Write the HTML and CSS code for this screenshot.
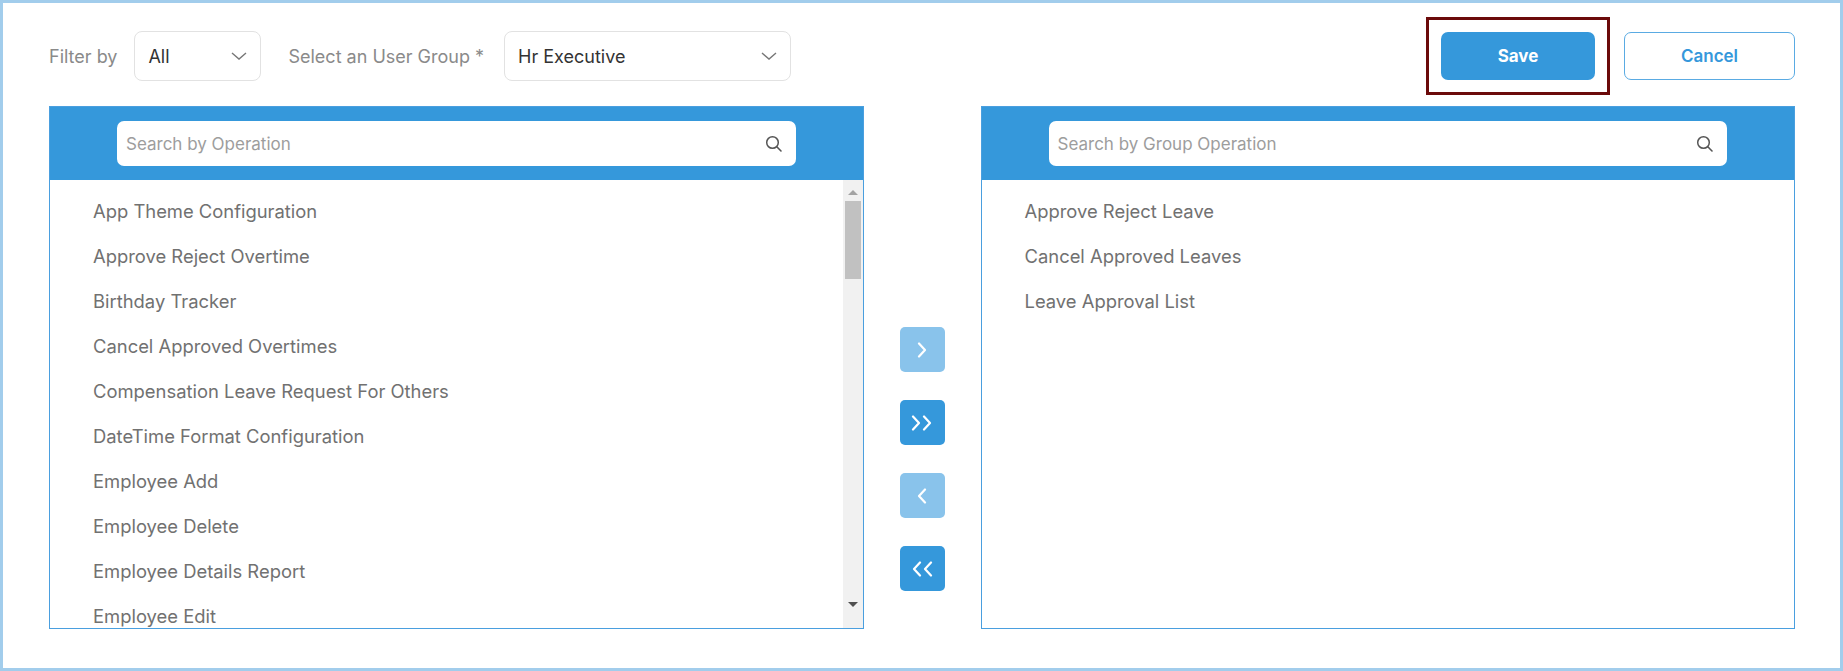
FILE: index.html
```
<!DOCTYPE html>
<html lang="en">
<head>
  <meta charset="UTF-8">
  <meta name="viewport" content="width=device-width, initial-scale=1.0">
  <title>User Group Operations</title>
  <link rel="stylesheet" href="styles.css">
</head>
<body>

  <div class="page">
    <!-- toolbar -->
    <div class="toolbar">
      <span class="label">Filter by</span>
      <div class="select select-filter">
        <span>All</span>
        <svg class="chevron" width="16" height="8" viewBox="0 0 16 8"><path d="M1 1 L8 7 L15 1" fill="none" stroke="#777" stroke-width="1.4"/></svg>
      </div>
      <span class="label label-group">Select an User Group *</span>
      <div class="select select-group">
        <span>Hr Executive</span>
        <svg class="chevron" width="16" height="8" viewBox="0 0 16 8"><path d="M1 1 L8 7 L15 1" fill="none" stroke="#777" stroke-width="1.4"/></svg>
      </div>

      <div class="actions">
        <div class="highlight">
          <button class="btn btn-save">Save</button>
        </div>
        <button class="btn btn-cancel">Cancel</button>
      </div>
    </div>

    <!-- lists -->
    <div class="transfer">
      <div class="panel">
        <div class="panel-head">
          <div class="search">
            <span class="placeholder">Search by Operation</span>
            <svg width="18" height="18" viewBox="0 0 18 18"><circle cx="7.5" cy="7.5" r="5.8" fill="none" stroke="#555" stroke-width="1.5"/><path d="M11.8 11.8 L16 16" stroke="#555" stroke-width="1.6" stroke-linecap="round"/></svg>
          </div>
        </div>
        <div class="panel-body">
          <ul class="list">
            <li>App Theme Configuration</li>
            <li>Approve Reject Overtime</li>
            <li>Birthday Tracker</li>
            <li>Cancel Approved Overtimes</li>
            <li>Compensation Leave Request For Others</li>
            <li>DateTime Format Configuration</li>
            <li>Employee Add</li>
            <li>Employee Delete</li>
            <li>Employee Details Report</li>
            <li>Employee Edit</li>
          </ul>
          <div class="scrollbar">
            <div class="sb-arrow"><span class="tri-up"></span></div>
            <div class="sb-thumb"></div>
            <div class="sb-space"></div>
            <div class="sb-arrow sb-bottom"><span class="tri-down"></span></div>
          </div>
        </div>
      </div>

      <div class="moves">
        <button class="move light">
          <svg width="10" height="16" viewBox="0 0 10 16"><path d="M2 1.5 L8 8 L2 14.5" fill="none" stroke="#fff" stroke-width="2.2" stroke-linecap="round" stroke-linejoin="round"/></svg>
        </button>
        <button class="move">
          <svg width="22" height="16" viewBox="0 0 22 16"><path d="M2 1.5 L8 8 L2 14.5 M13 1.5 L19 8 L13 14.5" fill="none" stroke="#fff" stroke-width="2.2" stroke-linecap="round" stroke-linejoin="round"/></svg>
        </button>
        <button class="move light">
          <svg width="10" height="16" viewBox="0 0 10 16"><path d="M8 1.5 L2 8 L8 14.5" fill="none" stroke="#fff" stroke-width="2.2" stroke-linecap="round" stroke-linejoin="round"/></svg>
        </button>
        <button class="move">
          <svg width="22" height="16" viewBox="0 0 22 16"><path d="M9 1.5 L3 8 L9 14.5 M20 1.5 L14 8 L20 14.5" fill="none" stroke="#fff" stroke-width="2.2" stroke-linecap="round" stroke-linejoin="round"/></svg>
        </button>
      </div>

      <div class="panel">
        <div class="panel-head">
          <div class="search">
            <span class="placeholder">Search by Group Operation</span>
            <svg width="18" height="18" viewBox="0 0 18 18"><circle cx="7.5" cy="7.5" r="5.8" fill="none" stroke="#555" stroke-width="1.5"/><path d="M11.8 11.8 L16 16" stroke="#555" stroke-width="1.6" stroke-linecap="round"/></svg>
          </div>
        </div>
        <div class="panel-body">
          <ul class="list">
            <li>Approve Reject Leave</li>
            <li>Cancel Approved Leaves</li>
            <li>Leave Approval List</li>
          </ul>
        </div>
      </div>
    </div>
  </div>

</body>
</html>
```

FILE: styles.css
```
/* base */
* {
  box-sizing: border-box;
}

body {
  margin: 0;
  font-family: Inter, 'Noto Sans', sans-serif;
  background: #fff;
  color: #333;
}

.page {
  height: 100vh;
  border: 3px solid #a2cdec;
  padding: 14px 45px 39px 46px;
  display: flex;
  flex-direction: column;
}

/* toolbar */
.toolbar {
  display: flex;
  align-items: center;
}

.label {
  font-size: 18px;
  color: #8a8a8a;
  margin-right: 17px;
}

.label-group {
  margin-left: 27px;
  margin-right: 20px;
}

.select {
  height: 50px;
  border: 1px solid #e2e2e2;
  border-radius: 8px;
  display: flex;
  align-items: center;
  justify-content: space-between;
  padding: 0 13px 0 13px;
  font-size: 18px;
  color: #333;
}

.select-filter {
  width: 127px;
}

.select-group {
  width: 287px;
}

.actions {
  margin-left: auto;
  display: flex;
  align-items: center;
  gap: 14px;
}

.highlight {
  border: 3px solid #6b0a0a;
  padding: 12px;
}

.btn {
  font-family: Inter, 'Noto Sans', sans-serif;
  font-size: 17px;
  font-weight: 700;
  height: 48px;
  border-radius: 7px;
  cursor: pointer;
}

.btn-save {
  width: 154px;
  background: #3598db;
  color: #fff;
  border: none;
  display: block;
}

.btn-cancel {
  width: 171px;
  background: #fff;
  color: #3598db;
  border: 1px solid #5aabe3;
  font-weight: 600;
}

/* transfer lists */
.transfer {
  flex: 1;
  margin-top: 11px;
  display: grid;
  grid-template-columns: 1fr 117px 1fr;
  min-height: 0;
}

.panel {
  border: 1px solid #4a9fdf;
  display: flex;
  flex-direction: column;
  min-height: 0;
  overflow: hidden;
}

.panel-head {
  background: #3598db;
  padding: 14px 67px 14px 67px;
}

.search {
  height: 45px;
  background: #fff;
  border-radius: 7px;
  display: flex;
  align-items: center;
  justify-content: space-between;
  padding: 0 13px 0 9px;
}

.placeholder {
  font-size: 17px;
  color: #9d9d9d;
}

.panel-body {
  flex: 1;
  display: flex;
  min-height: 0;
}

.list {
  flex: 1;
  list-style: none;
  margin: 0;
  padding: 9px 0 0 43px;
  overflow: hidden;
}

.list li {
  height: 45px;
  line-height: 45px;
  font-size: 18.4px;
  color: #717171;
}

/* fake scrollbar */
.scrollbar {
  width: 20px;
  background: #f1f1f1;
  display: flex;
  flex-direction: column;
}

.sb-arrow {
  height: 20px;
  display: flex;
  justify-content: center;
  align-items: center;
  padding-top: 4px;
}

.sb-bottom {
  height: 26px;
  padding-top: 0;
  align-items: flex-start;
}

.tri-up {
  width: 0;
  height: 0;
  border-left: 5px solid transparent;
  border-right: 5px solid transparent;
  border-bottom: 5px solid #a3a3a3;
}

.tri-down {
  width: 0;
  height: 0;
  border-left: 5px solid transparent;
  border-right: 5px solid transparent;
  border-top: 5px solid #505050;
}

.sb-thumb {
  height: 78px;
  margin: 1px 2px 0 2px;
  background: #c1c1c1;
}

.sb-space {
  flex: 1;
}

/* move buttons */
.moves {
  display: flex;
  flex-direction: column;
  align-items: center;
  padding-top: 221px;
  gap: 28px;
}

.move {
  width: 45px;
  height: 45px;
  border: none;
  border-radius: 5px;
  background: #3598db;
  display: flex;
  align-items: center;
  justify-content: center;
  padding: 0;
  cursor: pointer;
}

.move.light {
  background: #89c3eb;
}
```
